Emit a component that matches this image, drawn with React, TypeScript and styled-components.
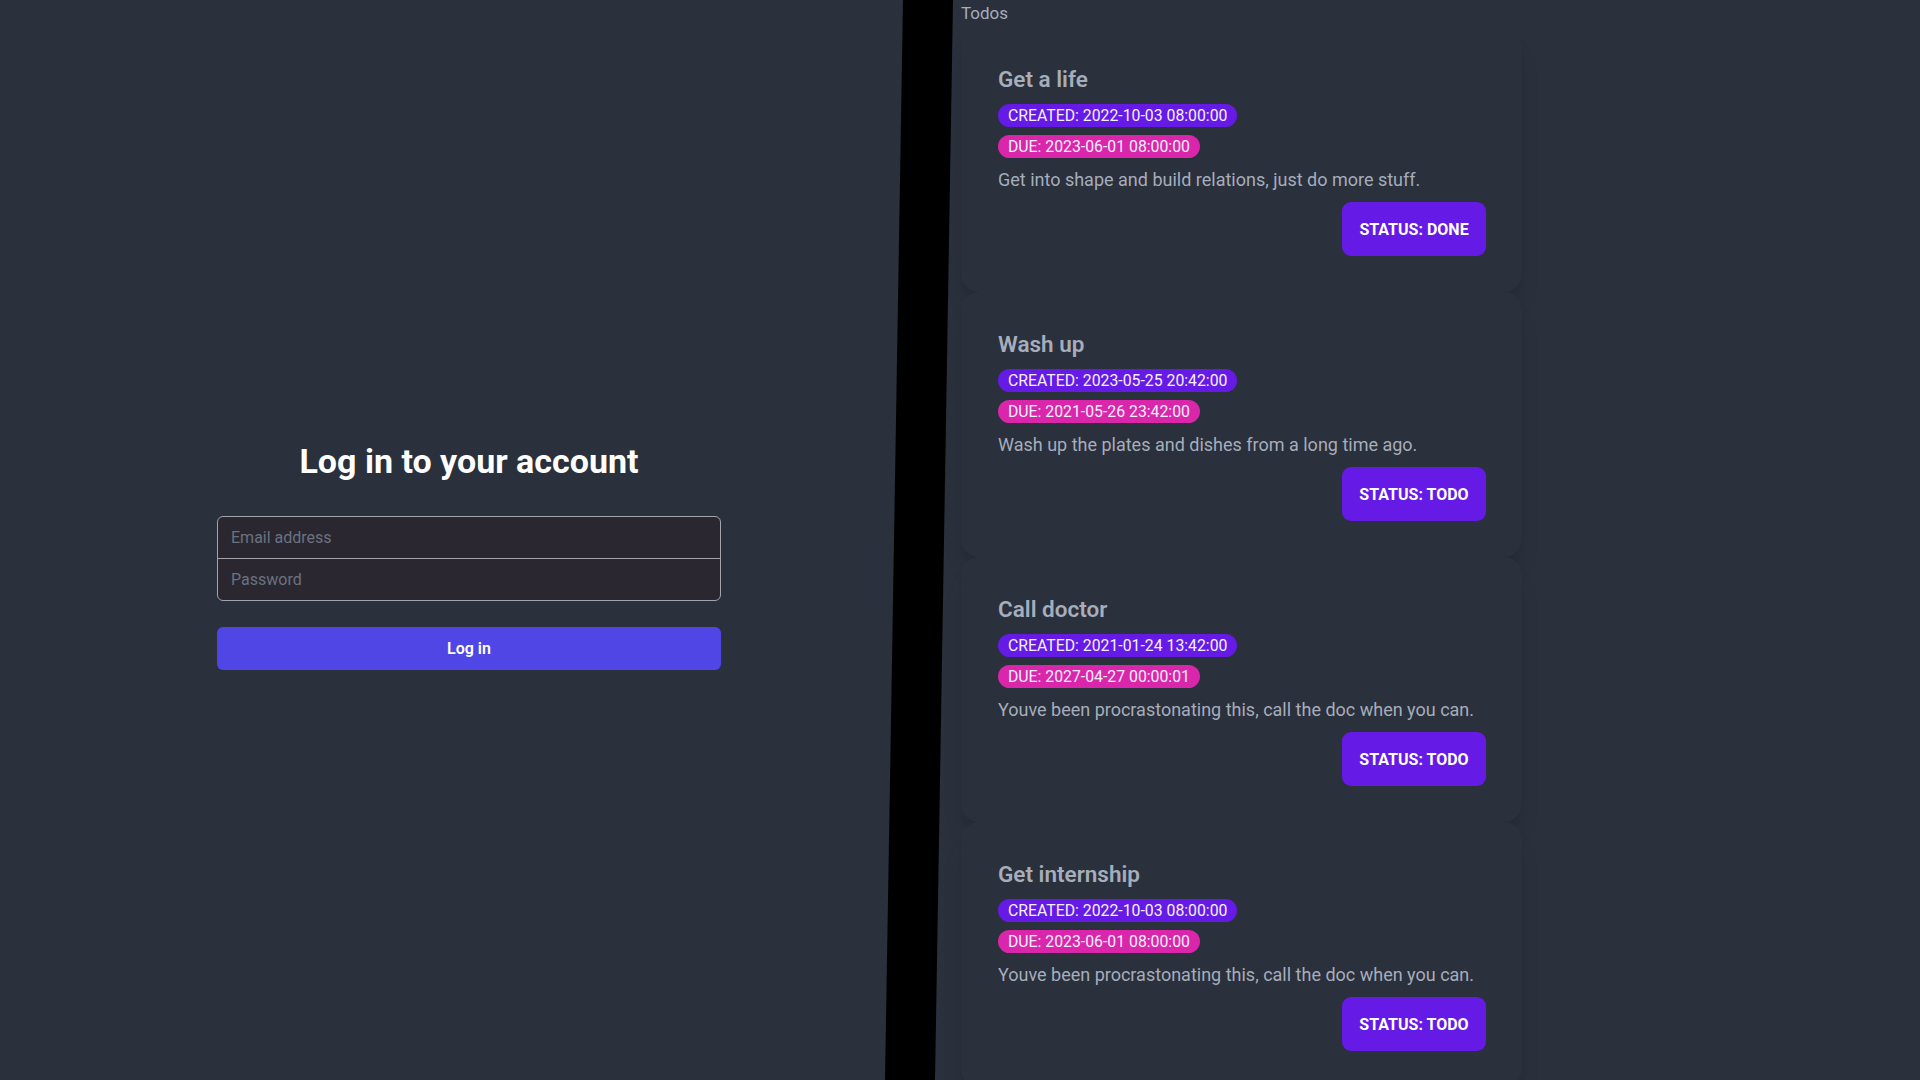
import React from 'react';
import styled, { createGlobalStyle } from 'styled-components';

const GlobalStyle = createGlobalStyle`
  html, body {
    margin: 0;
    padding: 0;
    background: #2a303c;
    font-family: Roboto, "Noto Sans", "Liberation Sans", sans-serif;
  }
  * {
    box-sizing: border-box;
  }
`;

const Page = styled.div`
  display: flex;
  width: 100vw;
  height: 100vh;
  overflow: hidden;
  background: #2a303c;
`;

const LoginPane = styled.div`
  flex: 0 0 885px;
  display: flex;
  align-items: center;
  justify-content: center;
  padding: 31px 0 0 53px;
`;

const LoginForm = styled.form`
  width: 504px;
  display: flex;
  flex-direction: column;
`;

const LoginTitle = styled.h2`
  margin: 0 0 35px 0;
  height: 40px;
  line-height: 40px;
  text-align: center;
  font-size: 34px;
  font-weight: 700;
  color: #ffffff;
`;

const InputGroup = styled.div`
  display: flex;
  flex-direction: column;
  border: 1px solid #a3a3ab;
  border-radius: 6px;
  overflow: hidden;
  background: #2a2731;
`;

const TextInput = styled.input<{ $last?: boolean }>`
  height: ${(p) => (p.$last ? 41 : 42)}px;
  padding: 0 13px;
  border: none;
  border-bottom: ${(p) => (p.$last ? 'none' : '1px solid #a3a3ab')};
  background: transparent;
  color: #e5e7eb;
  font-family: inherit;
  font-size: 16px;
  outline: none;

  &::placeholder {
    color: #6b7280;
  }
`;

const SubmitButton = styled.button`
  margin-top: 26px;
  height: 43px;
  border: none;
  border-radius: 6px;
  background: #4f46e5;
  color: #ffffff;
  font-family: inherit;
  font-size: 16px;
  font-weight: 600;
`;

const Divider = styled.div`
  flex: 0 0 68px;
  background: #000000;
  clip-path: polygon(18px 0, 68px 0, 50px 100%, 0 100%);
`;

const TodoPane = styled.div`
  flex: 1;
  padding-left: 8px;
  display: flex;
  flex-direction: column;
`;

const PaneHeading = styled.div`
  flex: 0 0 27px;
  line-height: 26px;
  font-size: 17px;
  color: #a6adbb;
`;

const TodoList = styled.div`
  width: 561px;
  display: flex;
  flex-direction: column;
`;

const Card = styled.div`
  flex: 0 0 265px;
  padding: 36px 36px 36px 37px;
  border-radius: 18px;
  background: #2a303c;
  box-shadow: 0 20px 25px -5px rgba(0, 0, 0, 0.1), 0 8px 10px -6px rgba(0, 0, 0, 0.1);
  display: flex;
  flex-direction: column;
  align-items: flex-start;
`;

const CardTitle = styled.h3`
  margin: 0;
  height: 32px;
  line-height: 32px;
  font-size: 22.5px;
  font-weight: 600;
  color: #a6adbb;
`;

const Badge = styled.span<{ $tone: 'primary' | 'secondary' }>`
  margin-top: ${(p) => (p.$tone === 'primary' ? 9 : 8)}px;
  height: 23px;
  line-height: 23px;
  padding: 0 10px;
  border-radius: 999px;
  font-size: 15.8px;
  color: #f4f0ff;
  background: ${(p) => (p.$tone === 'primary' ? '#661ae6' : '#d926aa')};
`;

const Description = styled.p`
  margin: 8px 0 0 0;
  line-height: 27px;
  font-size: 18px;
  color: #a6adbb;
`;

const Actions = styled.div`
  margin-top: 9px;
  align-self: stretch;
  display: flex;
  justify-content: flex-end;
`;

const StatusButton = styled.button`
  width: 144px;
  height: 54px;
  border: none;
  border-radius: 9px;
  background: #661ae6;
  color: #ffffff;
  font-family: inherit;
  font-size: 16px;
  font-weight: 700;
  text-transform: uppercase;
`;

type Todo = {
  title: string;
  created: string;
  due: string;
  description: string;
  status: string;
};

const todos: Todo[] = [
  {
    title: 'Get a life',
    created: '2022-10-03 08:00:00',
    due: '2023-06-01 08:00:00',
    description: 'Get into shape and build relations, just do more stuff.',
    status: 'Done',
  },
  {
    title: 'Wash up',
    created: '2023-05-25 20:42:00',
    due: '2021-05-26 23:42:00',
    description: 'Wash up the plates and dishes from a long time ago.',
    status: 'Todo',
  },
  {
    title: 'Call doctor',
    created: '2021-01-24 13:42:00',
    due: '2027-04-27 00:00:01',
    description: 'Youve been procrastonating this, call the doc when you can.',
    status: 'Todo',
  },
  {
    title: 'Get internship',
    created: '2022-10-03 08:00:00',
    due: '2023-06-01 08:00:00',
    description: 'Youve been procrastonating this, call the doc when you can.',
    status: 'Todo',
  },
];

const TodoCard: React.FC<{ todo: Todo }> = ({ todo }) => (
  <Card>
    <CardTitle>{todo.title}</CardTitle>
    <Badge $tone="primary">CREATED: {todo.created}</Badge>
    <Badge $tone="secondary">DUE: {todo.due}</Badge>
    <Description>{todo.description}</Description>
    <Actions>
      <StatusButton>Status: {todo.status}</StatusButton>
    </Actions>
  </Card>
);

const App: React.FC = () => {
  return (
    <>
      <GlobalStyle />
      <Page>
        <LoginPane>
          <LoginForm onSubmit={(e) => e.preventDefault()}>
            <LoginTitle>Log in to your account</LoginTitle>
            <InputGroup>
              <TextInput type="email" placeholder="Email address" />
              <TextInput type="password" placeholder="Password" $last />
            </InputGroup>
            <SubmitButton type="submit">Log in</SubmitButton>
          </LoginForm>
        </LoginPane>
        <Divider />
        <TodoPane>
          <PaneHeading>Todos</PaneHeading>
          <TodoList>
            {todos.map((todo) => (
              <TodoCard key={todo.title} todo={todo} />
            ))}
          </TodoList>
        </TodoPane>
      </Page>
    </>
  );
};

export default App;
